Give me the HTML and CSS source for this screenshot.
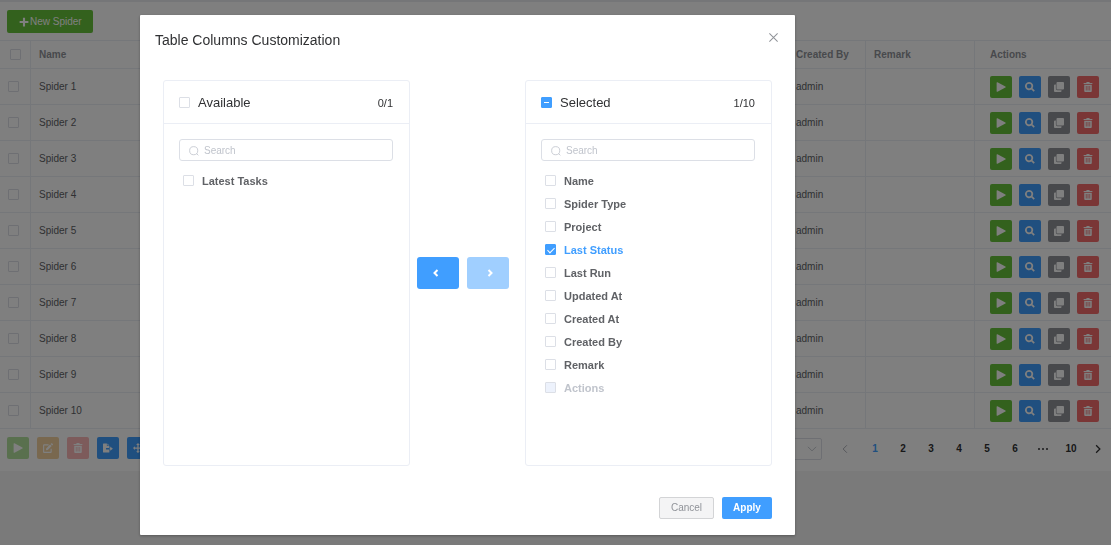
FILE: index.html
```html
<!DOCTYPE html>
<html lang="en">
<head>
<meta charset="utf-8">
<title>Spiders</title>
<link rel="stylesheet" href="styles.css">
</head>
<body>
<svg class="sprite" aria-hidden="true">
  <symbol id="i-play" viewBox="0 0 16 16"><path d="M1 1.2v13.6c0 .8.8 1.100 1.400.8L15 8.900c.7-.4.7-1.400 0-1.800L2.400.4C1.800.1 1 .5 1 1.200z"/></symbol>
  <symbol id="i-find" viewBox="0 0 16 16"><path fill-rule="evenodd" d="M6.500 0a6.500 6.500 0 1 0 3.600 11.900l3.700 3.700 1.900-1.900-3.700-3.700A6.500 6.500 0 0 0 6.500 0zm0 2.700a3.800 3.800 0 1 1 0 7.600 3.800 3.800 0 0 1 0-7.600z"/></symbol>
  <symbol id="i-copy" viewBox="0 0 16 16"><path d="M5.500 0h9A1.500 1.500 0 0 1 16 1.500v9a1.500 1.500 0 0 1-1.500 1.500h-9A1.500 1.500 0 0 1 4 10.500v-9A1.500 1.500 0 0 1 5.500 0zM3 4H1.500A1.500 1.500 0 0 0 0 5.500v9A1.500 1.500 0 0 0 1.500 16h9a1.500 1.500 0 0 0 1.500-1.500V13H5.500A2.500 2.500 0 0 1 3 10.500z"/></symbol>
  <symbol id="i-trash" viewBox="0 0 16 16"><path fill-rule="evenodd" d="M1 1.500h4L6 0h4l1 1.500h4v1.700H1zM2 4.500h12v10a1.500 1.500 0 0 1-1.500 1.500h-9A1.500 1.500 0 0 1 2 14.500zM4.500 6.500v7h1.200v-7zm2.900 0v7h1.200v-7zm2.900 0v7h1.200v-7z"/></symbol>
  <symbol id="i-edit" viewBox="0 0 16 16"><path d="M11.300 2.300l2.600 2.600-6.300 6.300-3 .4.400-3zM12.200 1.400l.8-.8c.5-.5 1.300-.5 1.800 0l.8.8c.5.5.5 1.300 0 1.800l-.8.8z"/><path d="M9 3H1.800C1.300 3 1 3.300 1 3.800v10.400c0 .5.300.8.800.8h10.400c.5 0 .8-.3.8-.8V9" fill="none" stroke="currentColor" stroke-width="1.800"/></symbol>
  <symbol id="i-export" viewBox="0 0 18 16"><path d="M0 1a1 1 0 0 1 1-1h6v4.500h4.500V8H5.500v2.500h6V15a1 1 0 0 1-1 1H1a1 1 0 0 1-1-1zM8 0l3.500 3.500H8zM13 5.500l4.800 3.800L13 13v-2.500h-1V8.200h1z"/></symbol>
  <symbol id="i-move" viewBox="0 0 16 16"><path d="M8 0l3 3H9v4h4V5l3 3-3 3V9H9v4h2l-3 3-3-3h2V9H3v2L0 8l3-3v2h4V3H5z"/></symbol>
  <symbol id="i-plus" viewBox="0 0 16 16"><path d="M6.300 1h3.400v5.300H15v3.400H9.700V15H6.300V9.700H1V6.300h5.300z"/></symbol>
  <symbol id="i-left" viewBox="0 0 16 16"><path d="M11 2L5 8l6 6" fill="none" stroke="currentColor"/></symbol>
  <symbol id="i-right" viewBox="0 0 16 16"><path d="M5 2l6 6-6 6" fill="none" stroke="currentColor"/></symbol>
  <symbol id="i-down" viewBox="0 0 16 16"><path d="M1.500 4.500L8 11l6.500-6.500" fill="none" stroke="currentColor" stroke-width="1.500"/></symbol>
  <symbol id="i-close" viewBox="0 0 16 16"><path d="M2 2l12 12M14 2L2 14" fill="none" stroke="currentColor" stroke-width="1.500"/></symbol>
  <symbol id="i-search" viewBox="0 0 16 16"><path d="M12 12L15 15M7.500 1a6.500 6.500 0 1 1 0 13 6.500 6.500 0 0 1 0-13z" fill="none" stroke="currentColor" stroke-width="1.300"/></symbol>
</svg>

<main class="page">
  <div class="toolbar">
    <button class="btn success create"><svg class="icon"><use href="#i-plus"/></svg>New Spider</button>
  </div>
  <table class="grid">
    <colgroup><col class="c-check"><col><col class="c-by"><col class="c-remark"><col class="c-actions"></colgroup>
    <thead>
      <tr><th><input class="check" type="checkbox" aria-label="Select all"></th><th>Name</th><th>Created By</th><th>Remark</th><th class="act">Actions</th></tr>
    </thead>
    <tbody id="rows"></tbody>
  </table>
  <div class="footer">
    <div class="tools">
      <button class="btn success off" aria-label="Run" disabled><svg class="icon"><use href="#i-play"/></svg></button>
      <button class="btn warning off" aria-label="Edit" disabled><svg class="icon"><use href="#i-edit"/></svg></button>
      <button class="btn danger off" aria-label="Delete" disabled><svg class="icon"><use href="#i-trash"/></svg></button>
      <button class="btn primary" aria-label="Export"><svg class="icon"><use href="#i-export"/></svg></button>
      <button class="btn primary" aria-label="Customize columns"><svg class="icon"><use href="#i-move"/></svg></button>
    </div>
    <nav class="pager" aria-label="Pages">
      <span class="size"><select aria-label="Page size"></select><svg class="icon"><use href="#i-down"/></svg></span>
      <button class="prev" aria-label="Previous" disabled><svg class="icon"><use href="#i-left"/></svg></button>
      <button class="current">1</button><button>2</button><button>3</button><button>4</button><button>5</button><button>6</button>
      <button aria-label="More"><span class="dots"><i></i><i></i><i></i></span></button>
      <button>10</button>
      <button class="next" aria-label="Next"><svg class="icon"><use href="#i-right"/></svg></button>
    </nav>
  </div>
</main>

<div class="overlay">
  <section class="dialog" role="dialog" aria-labelledby="dialog-title">
    <header class="dialog-head">
      <h1 id="dialog-title">Table Columns Customization</h1>
      <button class="close" aria-label="Close"><svg class="icon"><use href="#i-close"/></svg></button>
    </header>
    <div class="transfer">
      <section class="panel">
        <header class="panel-head">
          <label><input class="check" type="checkbox">Available</label><span>0/1</span>
        </header>
        <div class="panel-body">
          <div class="search"><svg class="icon"><use href="#i-search"/></svg><input type="text" placeholder="Search" aria-label="Search available"></div>
          <div class="items">
            <label><input class="check" type="checkbox">Latest Tasks</label>
          </div>
        </div>
      </section>
      <div class="arrows">
        <button aria-label="Move left"><svg class="icon"><use href="#i-left"/></svg></button>
        <button aria-label="Move right" disabled><svg class="icon"><use href="#i-right"/></svg></button>
      </div>
      <section class="panel">
        <header class="panel-head">
          <label><input class="check partial" type="checkbox">Selected</label><span>1/10</span>
        </header>
        <div class="panel-body">
          <div class="search"><svg class="icon"><use href="#i-search"/></svg><input type="text" placeholder="Search" aria-label="Search selected"></div>
          <div class="items">
            <label><input class="check" type="checkbox">Name</label>
            <label><input class="check" type="checkbox">Spider Type</label>
            <label><input class="check" type="checkbox">Project</label>
            <label class="on"><input class="check" type="checkbox" checked>Last Status</label>
            <label><input class="check" type="checkbox">Last Run</label>
            <label><input class="check" type="checkbox">Updated At</label>
            <label><input class="check" type="checkbox">Created At</label>
            <label><input class="check" type="checkbox">Created By</label>
            <label><input class="check" type="checkbox">Remark</label>
            <label class="disabled"><input class="check" type="checkbox" disabled>Actions</label>
          </div>
        </div>
      </section>
    </div>
    <footer class="dialog-foot">
      <button class="btn plain">Cancel</button>
      <button class="btn primary apply">Apply</button>
    </footer>
  </section>
</div>
<script src="app.js"></script>
</body>
</html>
```
FILE: styles.css
```css
* { box-sizing: border-box; }
body {
  margin: 0;
  min-height: 100vh;
  background: #f5f5f5;
  color: #606266;
  font: 10px/14px "Liberation Sans", Arial, sans-serif;
}
button, input, select { font: inherit; color: inherit; }
button { border: 0; padding: 0; background: none; }
.sprite { position: absolute; width: 0; height: 0; }
.icon { width: 10px; height: 10px; fill: currentColor; flex: none; }

.page { background: #fff; border-top: 2px solid #ebedf0; overflow: hidden; }
.toolbar { padding: 8px 7px 7px; }

.btn {
  display: inline-flex;
  align-items: center;
  justify-content: center;
  width: 22px;
  height: 22px;
  border-radius: 2px;
  color: #fff;
}
.success { background: #67c23a; }
.primary { background: #409eff; }
.info { background: #909399; }
.danger { background: #f56c6c; }
.success.off { background: #b3e19d; }
.warning.off { background: #f3d19e; }
.danger.off { background: #fab6b6; }
.create { width: auto; height: 23px; padding: 0 11px 0 12px; gap: 1px; }

.check {
  appearance: none;
  display: inline-grid;
  place-items: center;
  flex: none;
  width: 11px;
  height: 11px;
  margin: 0;
  border: 1px solid #dcdfe6;
  border-radius: 1px;
  background: #fff;
}
.check:checked, .check.partial { background: #409eff; border-color: #409eff; }
.check:checked::after {
  content: "";
  width: 3px;
  height: 6px;
  border: solid #fff;
  border-width: 0 1px 1px 0;
  transform: rotate(45deg);
}
.check.partial::after { content: ""; width: 5px; height: 1px; background: #fff; }
.check:disabled { background: #edf2fc; }

.grid { width: 100%; table-layout: fixed; border-collapse: separate; border-spacing: 0; border-top: 1px solid #ebeef5; }
.c-check { width: 31px; }
.c-by { width: 78px; }
.c-remark { width: 109px; }
.c-actions { width: 136px; }
.grid th, .grid td {
  height: 36px;
  padding: 0 8px;
  border-bottom: 1px solid #ebeef5;
  border-right: 1px solid #ebeef5;
  text-align: left;
}
.grid th { height: 28px; color: #909399; }
.grid th:first-child { padding-left: 10px; }
.grid th:nth-child(2), .grid td:nth-child(2) { border-right: 0; }
.grid .act { padding-left: 15px; border-right: 0; }
.grid .check { vertical-align: middle; }
.ops { display: flex; gap: 7px; }

.footer { display: flex; justify-content: space-between; padding: 8px 0 10px 7px; }
.tools { display: flex; gap: 8px; }
.pager { display: flex; align-items: center; }
.pager button {
  display: flex;
  align-items: center;
  justify-content: center;
  width: 28px;
  height: 24px;
  color: #303133;
  font-weight: bold;
}
.pager .current { color: #409eff; }
.pager .prev { width: 32px; color: #a8abb2; }
.pager .next { width: 26px; }
.pager .icon { stroke-width: 1.500; }
.pager .next .icon { stroke-width: 2; }
.size { display: flex; align-items: center; border: 1px solid #dcdfe6; border-radius: 2px; height: 22px; padding-right: 4px; margin-right: 7px; color: #c0c4cc; }
.size select { appearance: none; width: 60px; border: 0; background: none; }
.dots { display: flex; gap: 2px; }
.dots i { width: 2px; height: 2px; border-radius: 1px; background: #303133; }

.overlay {
  position: fixed;
  inset: 0;
  padding: 15px 316px 10px 140px;
  background: rgba(0, 0, 0, .5);
}
.dialog { background: #fff; border-radius: 1px; box-shadow: 0 1px 3px rgba(0, 0, 0, .3); }
.dialog-head { display: flex; justify-content: space-between; padding: 15px 16px 0 15px; }
h1 { margin: 0; font-size: 14px; font-weight: normal; line-height: 20px; color: #303133; }
.close { display: flex; align-self: flex-start; padding-top: 2px; color: #909399; }
.close .icon { width: 11px; height: 11px; }

.transfer { display: flex; align-items: center; padding: 30px 23px 31px; }
.panel { flex: 1; align-self: stretch; min-width: 0; min-height: 386px; border: 1px solid #ebeef5; border-radius: 3px; }
.panel-head {
  display: flex;
  align-items: center;
  justify-content: space-between;
  height: 43px;
  padding: 1px 16px 0 15px;
  border-bottom: 1px solid #ebeef5;
  color: #303133;
  font-size: 11px;
}
.panel-head label { display: flex; align-items: center; gap: 8px; font-size: 13px; }
.panel-body { padding: 15px 16px 0 15px; }
.search {
  display: flex;
  align-items: center;
  gap: 5px;
  height: 22px;
  padding: 1px 9px 0;
  border: 1px solid #dcdfe6;
  border-radius: 3px;
  color: #c0c4cc;
}
.search input { flex: 1; min-width: 0; border: 0; padding: 0; background: none; color: #606266; outline: 0; }
.search input::placeholder { color: #c0c4cc; }
.items { padding: 8px 4px; }
.items label { display: flex; align-items: center; gap: 8px; height: 23px; font-size: 11px; font-weight: bold; }
.items .on { color: #409eff; }
.items .disabled { color: #c0c4cc; }
.arrows { display: flex; gap: 8px; padding: 0 16px 0 7px; }
.arrows button {
  display: flex;
  align-items: center;
  justify-content: center;
  width: 42px;
  height: 32px;
  padding-right: 4px;
  border-radius: 3px;
  background: #409eff;
  color: #fff;
}
.arrows button:disabled { padding: 0 0 0 4px; background: #a0cfff; }
.arrows .icon { width: 8px; height: 8px; stroke-width: 4; }

.dialog-foot { display: flex; justify-content: flex-end; gap: 8px; padding: 0 23px 16px; }
.dialog-foot .btn { width: 50px; }
.dialog-foot .plain { width: 55px; border: 1px solid #d3d4d6; background: #f4f4f5; color: #909399; }
.dialog-foot .apply { font-weight: bold; }
```
FILE: app.js
```js
const icon = (name) => `<svg class="icon"><use href="#i-${name}"/></svg>`;
const actions = [
  ["success", "play", "Run"],
  ["primary", "find", "View"],
  ["info", "copy", "Copy"],
  ["danger", "trash", "Delete"],
];
const ops = actions
  .map(([kind, name, label]) => `<button class="btn ${kind}" aria-label="${label}">${icon(name)}</button>`)
  .join("");

document.getElementById("rows").innerHTML = Array.from({ length: 10 }, (_, i) => `
  <tr>
    <td><input class="check" type="checkbox" aria-label="Select Spider ${i + 1}"></td>
    <td>Spider ${i + 1}</td><td>admin</td><td></td>
    <td class="act"><div class="ops">${ops}</div></td>
  </tr>`).join("");
```
